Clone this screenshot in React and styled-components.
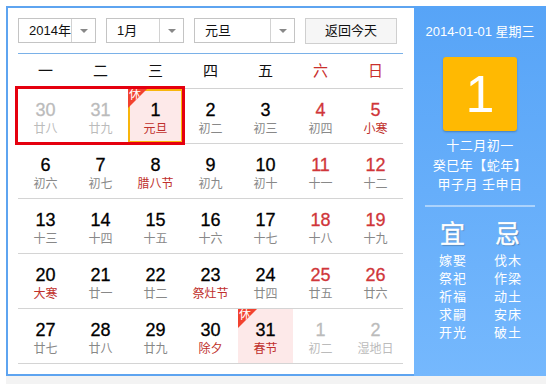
import React from "react";
import styled, { createGlobalStyle } from "styled-components";

const GlobalStyle = createGlobalStyle`
  body {
    margin: 0;
    background: #fff;
    font-family: "Liberation Sans", "Noto Sans CJK SC", sans-serif;
  }
`;

const WEEK = ["一", "二", "三", "四", "五", "六", "日"];

// o = other month, w = weekend, r = red lunar text, h = holiday bg, x = rest badge, s = selected
const ROWS = [
  [
    { d: 30, l: "廿八", o: 1 },
    { d: 31, l: "廿九", o: 1 },
    { d: 1, l: "元旦", r: 1, h: 1, x: 1, s: 1 },
    { d: 2, l: "初二" },
    { d: 3, l: "初三" },
    { d: 4, l: "初四", w: 1 },
    { d: 5, l: "小寒", w: 1, r: 1 },
  ],
  [
    { d: 6, l: "初六" },
    { d: 7, l: "初七" },
    { d: 8, l: "腊八节", r: 1 },
    { d: 9, l: "初九" },
    { d: 10, l: "初十" },
    { d: 11, l: "十一", w: 1 },
    { d: 12, l: "十二", w: 1 },
  ],
  [
    { d: 13, l: "十三" },
    { d: 14, l: "十四" },
    { d: 15, l: "十五" },
    { d: 16, l: "十六" },
    { d: 17, l: "十七" },
    { d: 18, l: "十八", w: 1 },
    { d: 19, l: "十九", w: 1 },
  ],
  [
    { d: 20, l: "大寒", r: 1 },
    { d: 21, l: "廿一" },
    { d: 22, l: "廿二" },
    { d: 23, l: "祭灶节", r: 1 },
    { d: 24, l: "廿四" },
    { d: 25, l: "廿五", w: 1 },
    { d: 26, l: "廿六", w: 1 },
  ],
  [
    { d: 27, l: "廿七" },
    { d: 28, l: "廿八" },
    { d: 29, l: "廿九" },
    { d: 30, l: "除夕", r: 1 },
    { d: 31, l: "春节", r: 1, h: 1, x: 1 },
    { d: 1, l: "初二", o: 1 },
    { d: 2, l: "湿地日", o: 1 },
  ],
];

const YI = ["嫁娶", "祭祀", "祈福", "求嗣", "开光"];
const JI = ["伐木", "作梁", "动土", "安床", "破土"];

function Select({ w, children }) {
  return (
    <SelectBox $w={w}>
      <SelectText>{children}</SelectText>
      <SelectArrow>
        <Caret />
      </SelectArrow>
    </SelectBox>
  );
}

export default function App() {
  return (
    <>
      <GlobalStyle />
      <Page>
        <Widget>
          <Main>
            <Toolbar>
              <Select w={78}>2014年</Select>
              <Select w={78}>1月</Select>
              <Select w={101}>元旦</Select>
              <TodayBtn>返回今天</TodayBtn>
            </Toolbar>
            <WeekHead>
              {WEEK.map((w, i) => (
                <WeekDay key={w} $red={i > 4}>
                  {w}
                </WeekDay>
              ))}
            </WeekHead>
            <Body>
              {ROWS.map((row, ri) => (
                <Row key={ri}>
                  {row.map((c, ci) => (
                    <Cell key={ci} $hl={c.h} $sel={c.s}>
                      {c.x && <Rest>休</Rest>}
                      <Day $other={c.o} $red={c.w}>
                        {c.d}
                      </Day>
                      <Lunar $other={c.o} $red={c.r}>
                        {c.l}
                      </Lunar>
                    </Cell>
                  ))}
                </Row>
              ))}
              <WeekMark />
            </Body>
          </Main>
          <Side>
            <DateLine>2014-01-01 星期三</DateLine>
            <BigDay>1</BigDay>
            <LunarInfo>
              <div>十二月初一</div>
              <div>癸巳年【蛇年】</div>
              <div>甲子月 壬申日</div>
            </LunarInfo>
            <Divider />
            <Almanac>
              <AlmanacTitle>宜</AlmanacTitle>
              <AlmanacTitle>忌</AlmanacTitle>
              <AlmanacList>
                {YI.map((t) => (
                  <div key={t}>{t}</div>
                ))}
              </AlmanacList>
              <AlmanacList>
                {JI.map((t) => (
                  <div key={t}>{t}</div>
                ))}
              </AlmanacList>
            </Almanac>
          </Side>
        </Widget>
        <Shade />
      </Page>
    </>
  );
}

const Page = styled.div`
  padding: 6px 0 0 6px;
  width: 540px;
`;

const Widget = styled.div`
  display: flex;
  width: 540px;
  height: 370px;
`;

const Main = styled.div`
  width: 408px;
  box-sizing: border-box;
  border: 2px solid #5ea4f0;
  border-right: none;
  padding: 10px 11px 0 10px;
  background: #fff;
`;

const Toolbar = styled.div`
  display: flex;
  align-items: flex-start;
  gap: 10px;
  height: 35px;
  border-bottom: 1px solid #7ab1e8;
`;

const SelectBox = styled.div`
  display: flex;
  width: ${(p) => p.$w}px;
  height: 25px;
  box-sizing: border-box;
  border: 1px solid #c4c4c4;
  background: #fff;
`;

const SelectText = styled.div`
  flex: 1;
  padding-left: 10px;
  font-size: 13px;
  line-height: 23px;
  color: #111;
`;

const SelectArrow = styled.div`
  width: 24px;
  box-sizing: border-box;
  border-left: 1px solid #d2d2d2;
  display: flex;
  align-items: center;
  justify-content: center;
`;

const Caret = styled.span`
  width: 0;
  height: 0;
  border-left: 4px solid transparent;
  border-right: 4px solid transparent;
  border-top: 4px solid #888;
`;

const TodayBtn = styled.div`
  width: 92px;
  height: 26px;
  box-sizing: border-box;
  border: 1px solid #cfcfcf;
  background: #f6f6f6;
  font-size: 13px;
  line-height: 24px;
  text-align: center;
  color: #111;
`;

const WeekHead = styled.div`
  display: grid;
  grid-template-columns: repeat(7, 55px);
  height: 34px;
  border-bottom: 1px solid #d2d2d2;
`;

const WeekDay = styled.div`
  font-size: 15px;
  line-height: 34px;
  text-align: center;
  color: ${(p) => (p.$red ? "#c9302c" : "#111")};
`;

const Body = styled.div`
  position: relative;
`;

const Row = styled.div`
  display: grid;
  grid-template-columns: repeat(7, 55px);
  height: 54px;
  border-bottom: 1px solid #d4d4d4;

  &:last-of-type {
    border-bottom: none;
  }
`;

const Cell = styled.div`
  position: relative;
  box-sizing: border-box;
  padding-top: 11px;
  text-align: center;
  background: ${(p) => (p.$hl ? "#fde9e9" : "transparent")};
  box-shadow: ${(p) => (p.$sel ? "inset 0 0 0 2px #f8b50c" : "none")};
`;

const Rest = styled.span`
  position: absolute;
  top: 0;
  left: 0;
  width: 19px;
  height: 19px;
  background: #f2422f;
  clip-path: polygon(0 0, 100% 0, 0 100%);
  color: #fff;
  font-size: 12px;
  line-height: 12px;
  text-align: left;
  padding-left: 1px;
  box-sizing: border-box;
`;

const Day = styled.div`
  font-size: 18px;
  line-height: 20px;
  color: ${(p) => (p.$other ? "#bbb" : p.$red ? "#d0363a" : "#000")};
  -webkit-text-stroke: 0.3px currentColor;
`;

const Lunar = styled.div`
  font-size: 12px;
  line-height: 18px;
  color: ${(p) => (p.$other ? "#bbb" : p.$red ? "#c0302c" : "#888")};
`;

const WeekMark = styled.div`
  position: absolute;
  left: -3px;
  top: -3px;
  width: 170px;
  height: 59px;
  box-sizing: border-box;
  border: 3px solid #e5000f;
  pointer-events: none;
`;

const Side = styled.div`
  width: 132px;
  display: flex;
  flex-direction: column;
  align-items: center;
  padding-top: 16px;
  box-sizing: border-box;
  background: linear-gradient(#57a4f7, #75b8fd);
  color: #fff;
`;

const DateLine = styled.div`
  font-size: 13px;
  line-height: 20px;
`;

const BigDay = styled.div`
  margin-top: 15px;
  width: 74px;
  height: 74px;
  border-radius: 3px;
  background: #ffb902;
  box-shadow: 0 1px 2px rgba(0, 0, 0, 0.25);
  font-size: 52px;
  line-height: 74px;
  text-align: center;
`;

const LunarInfo = styled.div`
  margin-top: 5px;
  font-size: 13px;
  line-height: 19.5px;
  letter-spacing: 0.5px;
  text-align: center;
`;

const Divider = styled.div`
  margin-top: 10px;
  width: 110px;
  height: 2px;
  background: rgba(255, 255, 255, 0.45);
`;

const Almanac = styled.div`
  margin-top: 12px;
  display: grid;
  grid-template-columns: 55px 55px;
  text-align: center;
`;

const AlmanacTitle = styled.div`
  font-size: 25px;
  line-height: 30px;
  -webkit-text-stroke: 0.4px #fff;
  text-shadow: 1px 1px 1px rgba(0, 0, 0, 0.25);
`;

const AlmanacList = styled.div`
  margin-top: 3px;
  font-size: 13px;
  line-height: 18px;
  letter-spacing: 1px;
  padding-left: 1px;
`;

const Shade = styled.div`
  height: 8px;
  background: #f3f3f3;
`;
